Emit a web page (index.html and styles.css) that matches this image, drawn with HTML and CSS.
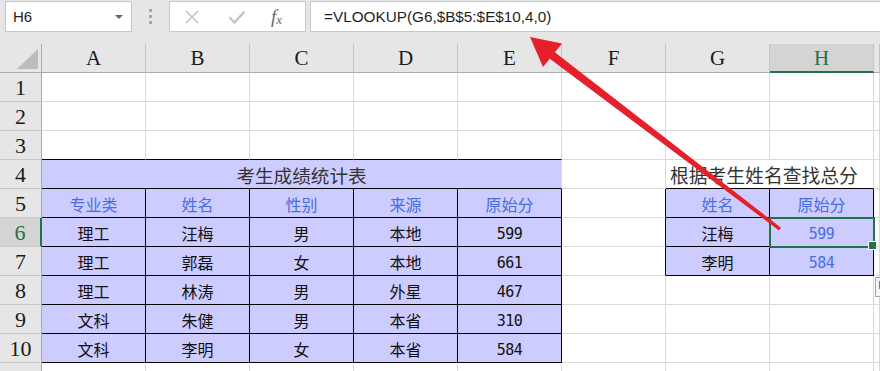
FILE: index.html
```html
<!DOCTYPE html>
<html lang="zh-CN">
<head>
<meta charset="utf-8">
<title>考生成绩统计表</title>
<link rel="stylesheet" href="styles.css">
</head>
<body>
<div class="app">
  <div class="toolbar">
    <div class="namebox"><span>H6</span><span class="caret"></span></div>
    <div class="grip"><i></i><i></i><i></i></div>
    <div class="fxbox">
      <svg class="ic" width="16" height="16" viewBox="0 0 16 16"><path d="M2 2 L14 14 M14 2 L2 14" stroke="#c4c4c4" stroke-width="1.6" fill="none"/></svg>
      <svg class="ic" width="18" height="16" viewBox="0 0 18 16"><path d="M1.5 8.5 L6.5 13.5 L16.5 2.5" stroke="#c4c4c4" stroke-width="2.4" fill="none"/></svg>
      <span class="fx">f<sub>x</sub></span>
    </div>
    <div class="formula">=VLOOKUP(G6,$B$5:$E$10,4,0)</div>
  </div>

  <div class="sheet">
    <!-- column headers -->
    <div class="corner"><span class="tri"></span></div>
    <div class="hd">A</div><div class="hd">B</div><div class="hd">C</div><div class="hd">D</div>
    <div class="hd">E</div><div class="hd">F</div><div class="hd">G</div><div class="hd hd-on">H</div><div class="hd"></div>

    <!-- rows 1-2 -->
    <div class="rh">1</div>
    <div class="c"></div><div class="c"></div><div class="c"></div><div class="c"></div><div class="c"></div><div class="c"></div><div class="c"></div><div class="c"></div><div class="c"></div>
    <div class="rh">2</div>
    <div class="c"></div><div class="c"></div><div class="c"></div><div class="c"></div><div class="c"></div><div class="c"></div><div class="c"></div><div class="c"></div><div class="c"></div>

    <!-- row 3 -->
    <div class="rh">3</div>
    <div class="c bb"></div><div class="c bb"></div><div class="c bb"></div><div class="c bb"></div><div class="c bb"></div>
    <div class="c"></div><div class="c"></div><div class="c"></div><div class="c"></div>

    <!-- row 4 -->
    <div class="rh">4</div>
    <div class="c title span5">考生成绩统计表</div>
    <div class="c"></div>
    <div class="c note span2">根据考生姓名查找总分</div>
    <div class="c"></div>

    <!-- row 5 -->
    <div class="rh">5</div>
    <div class="t head">专业类</div><div class="t head">姓名</div><div class="t head">性别</div><div class="t head">来源</div><div class="t head">原始分</div>
    <div class="c br"></div>
    <div class="t head">姓名</div><div class="t head">原始分</div>
    <div class="c"></div>

    <!-- row 6 -->
    <div class="rh rh-on">6</div>
    <div class="t">理工</div><div class="t">汪梅</div><div class="t">男</div><div class="t">本地</div><div class="t num">599</div>
    <div class="c br"></div>
    <div class="t">汪梅</div><div class="t num blue sel">599</div>
    <div class="c"></div>

    <!-- row 7 -->
    <div class="rh">7</div>
    <div class="t">理工</div><div class="t">郭磊</div><div class="t">女</div><div class="t">本地</div><div class="t num">661</div>
    <div class="c br"></div>
    <div class="t">李明</div><div class="t num blue">584</div>
    <div class="c"></div>

    <!-- row 8 -->
    <div class="rh">8</div>
    <div class="t">理工</div><div class="t">林涛</div><div class="t">男</div><div class="t">外星</div><div class="t num">467</div>
    <div class="c"></div><div class="c"></div><div class="c"></div><div class="c"></div>

    <!-- row 9 -->
    <div class="rh">9</div>
    <div class="t">文科</div><div class="t">朱健</div><div class="t">男</div><div class="t">本省</div><div class="t num">310</div>
    <div class="c"></div><div class="c"></div><div class="c"></div><div class="c"></div>

    <!-- row 10 -->
    <div class="rh">10</div>
    <div class="t">文科</div><div class="t">李明</div><div class="t">女</div><div class="t">本省</div><div class="t num">584</div>
    <div class="c"></div><div class="c"></div><div class="c"></div><div class="c"></div>

    <!-- row 11 (only its top edge is in view) -->
    <div class="rh"></div>
    <div class="c"></div><div class="c"></div><div class="c"></div><div class="c"></div><div class="c"></div><div class="c"></div><div class="c"></div><div class="c"></div><div class="c"></div>
  </div>

  <!-- paste options button next to the filled range -->
  <div class="paste-btn"><span></span></div>

  <!-- annotation arrow pointing at the formula -->
  <svg class="arrow" width="880" height="371" viewBox="0 0 880 371">
    <polygon points="554.5,52 549.5,58.5 779,230.5 781,227.8" fill="#e5202b"/>
    <polygon points="530,37 543,67 562,43.5" fill="#e5202b"/>
  </svg>
</div>
</body>
</html>
```

FILE: styles.css
```css
* { box-sizing: border-box; }

html, body {
  margin: 0;
  padding: 0;
}

body {
  width: 880px;
  height: 371px;
  overflow: hidden;
  background: #e6e6e6;
  font-family: "Noto Sans CJK SC", "Liberation Sans", sans-serif;
}

.app {
  position: relative;
  width: 880px;
  height: 371px;
  overflow: hidden;
}

/* ---------- formula bar ---------- */
.toolbar {
  height: 44px;
  display: flex;
  align-items: flex-start;
  padding: 1px 0 0 5px;
}

.namebox {
  width: 127px;
  height: 31px;
  background: #fff;
  border: 1px solid #c8c8c8;
  display: flex;
  align-items: center;
  justify-content: space-between;
  padding: 0 8px 0 7px;
  font-family: "Liberation Sans", sans-serif;
  font-size: 15px;
  color: #222;
}

.caret {
  width: 0;
  height: 0;
  border-left: 4px solid transparent;
  border-right: 4px solid transparent;
  border-top: 4px solid #666;
}

.grip {
  width: 37px;
  height: 31px;
  display: flex;
  flex-direction: column;
  align-items: center;
  justify-content: center;
  gap: 3px;
}

.grip i {
  display: block;
  width: 3px;
  height: 3px;
  background: #a8a8a8;
}

.fxbox {
  width: 137px;
  height: 31px;
  background: #fff;
  border: 1px solid #c8c8c8;
  display: flex;
  align-items: center;
  padding-left: 14px;
}

.fxbox .ic:first-child { margin-right: 28px; }
.fxbox .ic:nth-child(2) { margin-right: 25px; }

.fx {
  font-family: "Liberation Serif", serif;
  font-style: italic;
  font-size: 19px;
  color: #6a6a6a;
  line-height: 1;
}

.fx sub {
  font-size: 13px;
  vertical-align: -1px;
}

.formula {
  flex: 1;
  height: 31px;
  margin-left: 4px;
  background: #fff;
  border: 1px solid #c8c8c8;
  border-right: none;
  padding-left: 13px;
  font-family: "Liberation Sans", sans-serif;
  font-size: 15.3px;
  line-height: 29px;
  color: #1f1f1f;
}

/* ---------- sheet grid ---------- */
.sheet {
  display: grid;
  grid-template-columns: 42px repeat(8, 104px) 1fr;
  grid-template-rows: 29px;
  grid-auto-rows: 29px;
  background: #fff;
}

.sheet > div {
  border-right: 1px solid #d9d9d9;
  border-bottom: 1px solid #d9d9d9;
  display: flex;
  align-items: center;
  justify-content: center;
  white-space: nowrap;
}

.sheet > .corner {
  background: #e6e6e6;
  position: relative;
  border-right-color: #ababab;
  border-bottom-color: #ababab;
}

.tri {
  position: absolute;
  right: 3px;
  bottom: 3px;
  width: 0;
  height: 0;
  border-left: 21px solid transparent;
  border-bottom: 20px solid #bcbcbc;
}

.sheet > .hd {
  background: #e6e6e6;
  border-right-color: #c4c4c4;
  border-bottom-color: #ababab;
  font-family: "Liberation Serif", serif;
  font-size: 21px;
  color: #1a1a1a;
  padding-top: 1px;
}

.sheet > .hd-on {
  background: #d4d4d4;
  color: #217346;
  border-bottom: 2px solid #217346;
}

.sheet > .rh {
  background: #e6e6e6;
  border-right-color: #ababab;
  border-bottom-color: #c8c8c8;
  font-family: "Liberation Serif", serif;
  font-size: 22px;
  color: #1a1a1a;
  padding-top: 2px;
}

.sheet > .rh-on {
  background: #d4d4d4;
  color: #217346;
  border-right: 2px solid #217346;
}

/* plain cells */
.sheet > .bb { border-bottom-color: #000; }
.sheet > .br { border-right-color: #000; }

.span5 { grid-column: span 5; }
.span2 { grid-column: span 2; }

.sheet > .title {
  background: #ccccff;
  border-bottom-color: #000;
  font-size: 18.6px;
  color: #333;
  padding-top: 1px;
}

.sheet > .note {
  justify-content: flex-start;
  padding-left: 4px;
  padding-top: 1px;
  border-bottom-color: #000;
  font-size: 18.8px;
  color: #333;
}

/* filled table cells */
.sheet > .t {
  background: #ccccff;
  border-right-color: #000;
  border-bottom-color: #000;
  font-size: 16px;
  color: #111;
  padding-top: 1px;
}

.sheet > .head { color: #4a6ee0; }

.sheet > .num {
  font-family: "DejaVu Sans Mono", monospace;
  font-size: 15px;
  letter-spacing: -0.6px;
  padding-top: 4px;
}

.sheet > .blue { color: #4a6ee0; }

/* active cell */
.sheet > .sel {
  position: relative;
  outline: 2px solid #217346;
  outline-offset: -1px;
}

.sel::after {
  content: "";
  position: absolute;
  right: -4px;
  bottom: -4px;
  width: 7px;
  height: 7px;
  background: #217346;
  border: 1px solid #fff;
}

.paste-btn {
  position: absolute;
  left: 875px;
  top: 277px;
  width: 16px;
  height: 20px;
  background: #f4f4f4;
  border: 1px solid #a8a8a8;
  padding: 3px;
}

.paste-btn span {
  display: block;
  width: 6px;
  height: 8px;
  background: #5a7fc4;
}

.arrow {
  position: absolute;
  left: 0;
  top: 0;
  pointer-events: none;
}
```
